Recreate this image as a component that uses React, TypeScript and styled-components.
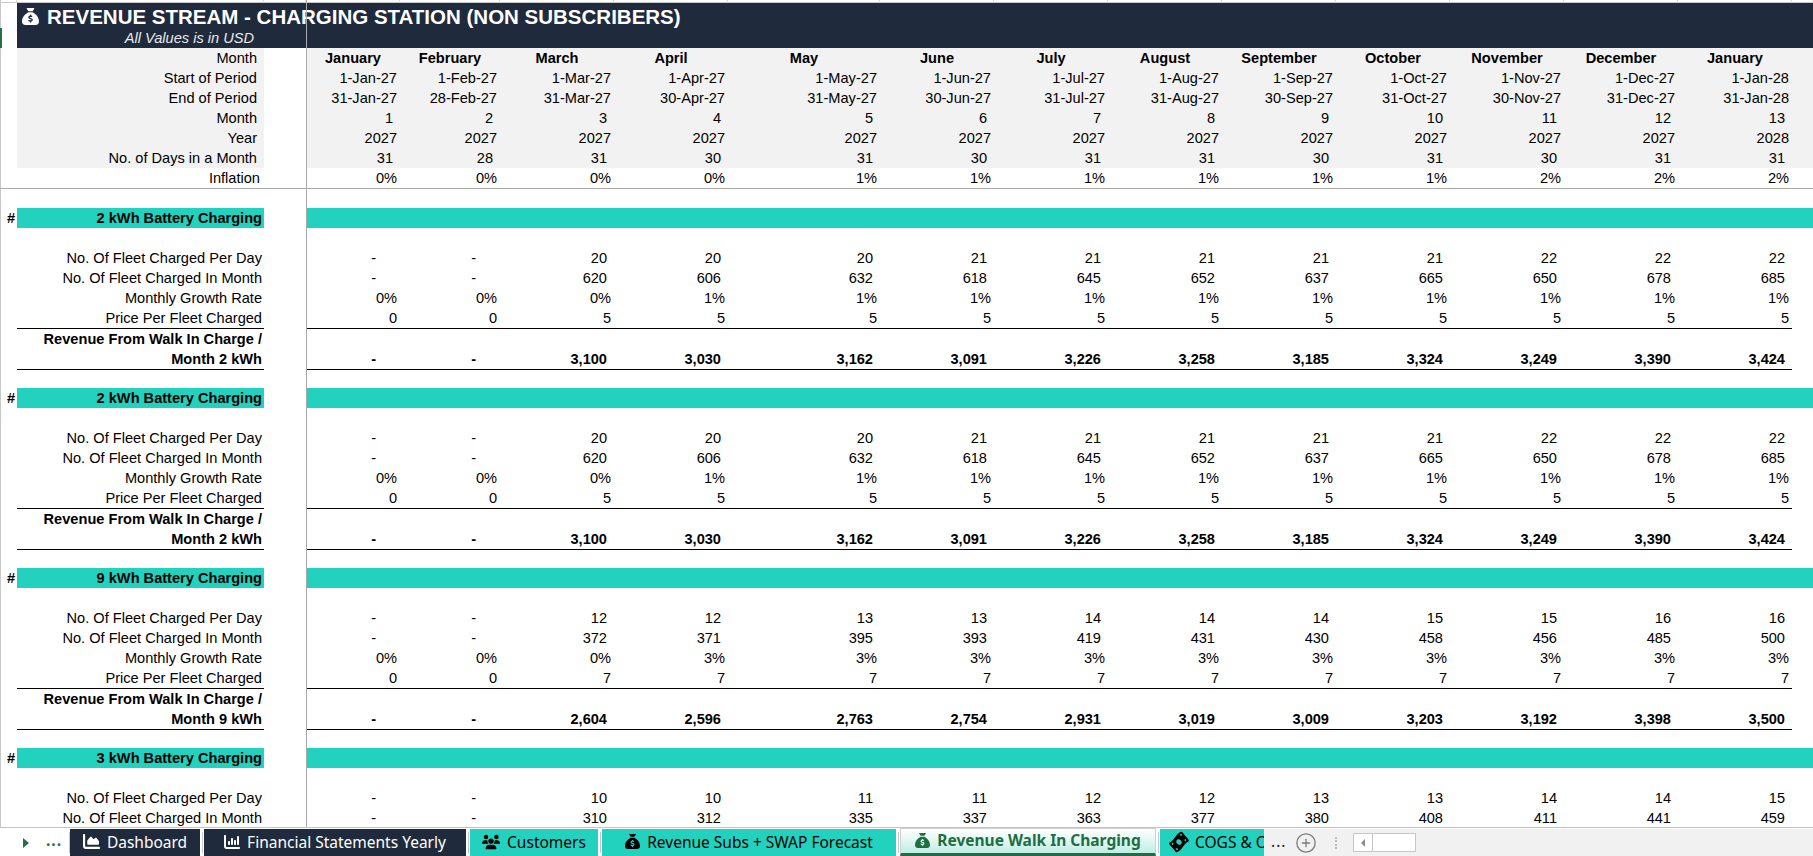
import React from "react";
import styled, { createGlobalStyle, css } from "styled-components";
import { FaSackDollar, FaUsers, FaChartArea, FaChartColumn, FaMoneyBillWave } from "react-icons/fa6";
import { CirclePlus } from "lucide-react";

const GRID = "17px 247px 42px 94px 100px 114px 114px 152px repeat(8, 114px) 1fr";
const NAVY = "#1f2a3c";
const TEAL = "#22d1be";
const GREY = "#f2f2f2";
const EXCEL_GREEN = "#217346";

type Kind = "acct" | "plain";

interface DataRow {
  label: string;
  kind: Kind;
  values: string[];
}

interface Section {
  title: string;
  unit: string;
  rows: DataRow[];
  revenue?: string[];
}

const MONTHS = [
  "January", "February", "March", "April", "May", "June", "July",
  "August", "September", "October", "November", "December", "January",
];

const HEADER_ROWS: DataRow[] = [
  {
    label: "Start of Period",
    kind: "plain",
    values: ["1-Jan-27", "1-Feb-27", "1-Mar-27", "1-Apr-27", "1-May-27", "1-Jun-27", "1-Jul-27", "1-Aug-27", "1-Sep-27", "1-Oct-27", "1-Nov-27", "1-Dec-27", "1-Jan-28"],
  },
  {
    label: "End of Period",
    kind: "plain",
    values: ["31-Jan-27", "28-Feb-27", "31-Mar-27", "30-Apr-27", "31-May-27", "30-Jun-27", "31-Jul-27", "31-Aug-27", "30-Sep-27", "31-Oct-27", "30-Nov-27", "31-Dec-27", "31-Jan-28"],
  },
  { label: "Month", kind: "acct", values: ["1", "2", "3", "4", "5", "6", "7", "8", "9", "10", "11", "12", "13"] },
  { label: "Year", kind: "plain", values: [...Array(12).fill("2027"), "2028"] },
  { label: "No. of Days in a Month", kind: "acct", values: ["31", "28", "31", "30", "31", "30", "31", "31", "30", "31", "30", "31", "31"] },
];

const INFLATION = ["0%", "0%", "0%", "0%", "1%", "1%", "1%", "1%", "1%", "1%", "2%", "2%", "2%"];

const twoKwh: Section = {
  title: "2 kWh Battery Charging",
  unit: "2 kWh",
  rows: [
    { label: "No. Of Fleet Charged Per Day", kind: "acct", values: ["-", "-", "20", "20", "20", "21", "21", "21", "21", "21", "22", "22", "22"] },
    { label: "No. Of Fleet Charged In Month", kind: "acct", values: ["-", "-", "620", "606", "632", "618", "645", "652", "637", "665", "650", "678", "685"] },
    { label: "Monthly Growth Rate", kind: "plain", values: ["0%", "0%", "0%", "1%", "1%", "1%", "1%", "1%", "1%", "1%", "1%", "1%", "1%"] },
    { label: "Price Per Fleet Charged", kind: "plain", values: ["0", "0", "5", "5", "5", "5", "5", "5", "5", "5", "5", "5", "5"] },
  ],
  revenue: ["-", "-", "3,100", "3,030", "3,162", "3,091", "3,226", "3,258", "3,185", "3,324", "3,249", "3,390", "3,424"],
};

const SECTIONS: Section[] = [
  twoKwh,
  twoKwh,
  {
    title: "9 kWh Battery Charging",
    unit: "9 kWh",
    rows: [
      { label: "No. Of Fleet Charged Per Day", kind: "acct", values: ["-", "-", "12", "12", "13", "13", "14", "14", "14", "15", "15", "16", "16"] },
      { label: "No. Of Fleet Charged In Month", kind: "acct", values: ["-", "-", "372", "371", "395", "393", "419", "431", "430", "458", "456", "485", "500"] },
      { label: "Monthly Growth Rate", kind: "plain", values: ["0%", "0%", "0%", "3%", "3%", "3%", "3%", "3%", "3%", "3%", "3%", "3%", "3%"] },
      { label: "Price Per Fleet Charged", kind: "plain", values: ["0", "0", "7", "7", "7", "7", "7", "7", "7", "7", "7", "7", "7"] },
    ],
    revenue: ["-", "-", "2,604", "2,596", "2,763", "2,754", "2,931", "3,019", "3,009", "3,203", "3,192", "3,398", "3,500"],
  },
  {
    title: "3 kWh Battery Charging",
    unit: "3 kWh",
    rows: [
      { label: "No. Of Fleet Charged Per Day", kind: "acct", values: ["-", "-", "10", "10", "11", "11", "12", "12", "13", "13", "14", "14", "15"] },
      { label: "No. Of Fleet Charged In Month", kind: "acct", values: ["-", "-", "310", "312", "335", "337", "363", "377", "380", "408", "411", "441", "459"] },
    ],
  },
];

// accounting format leaves room on the right, dashes sit further in
const padFor = (v: string, kind: Kind) => (v === "-" ? 24 : kind === "acct" ? 7 : 3);

const GlobalStyle = createGlobalStyle`
  html, body {
    margin: 0;
    padding: 0;
    background: #fff;
    overflow: hidden;
  }
  body {
    font-family: "Liberation Sans", Arial, sans-serif;
    font-size: 14.6px;
    color: #000;
  }
`;

const Page = styled.div`
  width: 1813px;
  height: 856px;
  display: flex;
  flex-direction: column;
  overflow: hidden;
`;

const Sheet = styled.div`
  position: relative;
  flex: 1;
  overflow: hidden;
  box-shadow: inset 1px 0 0 #c8c8c8;
`;

const FreezeLine = styled.div`
  position: absolute;
  top: 0;
  bottom: 0;
  left: 306px;
  width: 1px;
  background: #a9a9a9;
  z-index: 2;
`;

const Row = styled.div<{ $h?: number }>`
  display: grid;
  grid-template-columns: ${GRID};
  height: ${(p) => p.$h ?? 20}px;
  line-height: 20px;
`;

const StripCell = styled.div`
  box-sizing: border-box;
  border-right: 1px solid #dcdcdc;
  border-bottom: 1px solid #c8c8c8;
`;

const TitleBar = styled.div`
  display: grid;
  grid-template-columns: 17px 1fr;
  grid-template-rows: 25px 20px;
`;

const RowMark = styled.div`
  grid-column: 1;
  grid-row: 2;
  width: 2px;
  background: ${EXCEL_GREEN};
`;

const TitleBlock = styled.div`
  grid-column: 2;
  grid-row: 1 / 3;
  display: grid;
  grid-template-columns: 247px 1fr;
  grid-template-rows: 25px 20px;
  background: ${NAVY};
  color: #fff;
`;

const Title = styled.div`
  grid-column: 1 / -1;
  display: flex;
  align-items: center;
  gap: 8px;
  padding: 2px 0 0 5px;
  font-size: 20.5px;
  font-weight: 700;
  white-space: nowrap;
`;

const Subtitle = styled.div`
  grid-column: 1;
  grid-row: 2;
  text-align: right;
  padding-right: 10px;
  line-height: 20px;
  font-style: italic;
  color: #e9e9e9;
`;

const Label = styled.div<{ $grey?: boolean; $pad?: number; $rule?: boolean; $bold?: boolean }>`
  grid-column: 2;
  box-sizing: border-box;
  text-align: right;
  white-space: nowrap;
  padding-right: ${(p) => p.$pad ?? 2}px;
  background: ${(p) => (p.$grey ? GREY : "transparent")};
  font-weight: ${(p) => (p.$bold ? 700 : 400)};
  border-bottom: ${(p) => (p.$rule ? "1px solid #000" : "none")};
`;

const Value = styled.div<{ $pad: number; $grey?: boolean; $bold?: boolean; $rule?: boolean }>`
  box-sizing: border-box;
  display: flex;
  align-items: flex-end;
  justify-content: flex-end;
  white-space: nowrap;
  padding-right: ${(p) => p.$pad}px;
  background: ${(p) => (p.$grey ? GREY : "transparent")};
  font-weight: ${(p) => (p.$bold ? 700 : 400)};
  border-bottom: ${(p) => (p.$rule ? "1px solid #000" : "none")};
`;

const MonthName = styled.div`
  background: ${GREY};
  text-align: center;
  font-weight: 700;
  white-space: nowrap;
`;

const GreyFill = styled.div`
  background: ${GREY};
`;

const FreezeRule = styled.div`
  height: 1px;
  background: #a9a9a9;
`;

const Hash = styled.div`
  grid-column: 1;
  text-align: right;
  padding-right: 2px;
  font-weight: 700;
`;

const SectionTitle = styled.div`
  grid-column: 2;
  background: ${TEAL};
  text-align: right;
  padding-right: 2px;
  font-weight: 700;
  white-space: nowrap;
`;

const TealFill = styled.div`
  grid-column: 4 / -1;
  background: ${TEAL};
`;

const RevenueLabel = styled(Label)`
  display: flex;
  flex-direction: column;
  align-items: flex-end;
`;

/* ---------- sheet tabs ---------- */

const TabBar = styled.div`
  flex: 0 0 27px;
  display: flex;
  box-sizing: border-box;
  border-top: 1px solid #c4c4c4;
  background: #fff;
  font-family: "Noto Sans", "Open Sans", sans-serif;
  font-size: 15.5px;
`;

const Nav = styled.div`
  width: 70px;
  flex: none;
  display: flex;
  align-items: center;
  border-right: 1px solid #c8c8c8;
  margin: 4px 0 3px;
  box-sizing: border-box;
`;

const NavArrow = styled.span`
  margin-left: 23px;
  width: 0;
  height: 0;
  border-left: 6px solid ${EXCEL_GREEN};
  border-top: 5px solid transparent;
  border-bottom: 5px solid transparent;
`;

const NavMore = styled.span`
  margin-left: 17px;
  color: ${EXCEL_GREEN};
  font-weight: 700;
  letter-spacing: 1px;
  line-height: 1;
  padding-bottom: 4px;
`;

const TabGap = styled.div`
  width: 4px;
  flex: none;
  display: flex;
  justify-content: center;
  padding: 4px 0 3px;
  box-sizing: border-box;

  &::before {
    content: "";
    width: 1px;
    background: #c8c8c8;
  }
`;

type Tone = "dark" | "teal" | "active";

const Tab = styled.div<{ $w: number; $tone: Tone; $clip?: boolean }>`
  width: ${(p) => p.$w}px;
  flex: none;
  box-sizing: border-box;
  margin-top: 1px;
  display: flex;
  align-items: center;
  justify-content: ${(p) => (p.$clip ? "flex-start" : "center")};
  gap: 7px;
  padding: 0 0 2px ${(p) => (p.$clip ? 10 : 0)}px;
  overflow: hidden;
  white-space: nowrap;
  background: ${(p) => (p.$tone === "dark" ? NAVY : TEAL)};
  color: ${(p) => (p.$tone === "dark" ? "#fff" : "#000")};

  ${(p) =>
    p.$tone === "active" &&
    css`
      margin-top: 0;
      border: 1px solid #cfcfcf;
      border-bottom: 3px solid #1e6e41;
      background: linear-gradient(#ffffff, #bfeee5);
      color: #1e6e41;
      font-weight: 700;
    `}
`;

const TabText = styled.span<{ $clip?: boolean }>`
  ${(p) =>
    p.$clip &&
    css`
      overflow: hidden;
      min-width: 0;
    `}
`;

const Tail = styled.div`
  flex: 1;
  display: flex;
  align-items: center;
  background: #f1f1f1;
  margin-top: 1px;
`;

const TailMore = styled.span`
  margin-left: 7px;
  color: #222;
  letter-spacing: 1px;
  padding-bottom: 4px;
`;

const AddButton = styled.span`
  margin-left: 9px;
  display: flex;
  color: #7b7b7b;
`;

const DotSep = styled.span`
  margin-left: 18px;
  height: 12px;
  border-left: 2px dotted #bdbdbd;
`;

const Scroll = styled.div`
  margin-left: 16px;
  width: 63px;
  height: 19px;
  display: flex;
  box-sizing: border-box;
  border: 1px solid #c6c6c6;
  background: #fff;
`;

const ScrollArrow = styled.div`
  width: 18px;
  display: flex;
  align-items: center;
  justify-content: center;
  border-right: 1px solid #c6c6c6;

  &::before {
    content: "";
    border-right: 4px solid #8a8a8a;
    border-top: 4px solid transparent;
    border-bottom: 4px solid transparent;
  }
`;

const TABS: { label: string; w: number; tone: Tone; icon: React.ReactNode; clip?: boolean }[] = [
  { label: "Dashboard", w: 130, tone: "dark", icon: <FaChartArea size={17} /> },
  { label: "Financial Statements Yearly", w: 262, tone: "dark", icon: <FaChartColumn size={16} /> },
  { label: "Customers", w: 128, tone: "teal", icon: <FaUsers size={18} /> },
  { label: "Revenue Subs + SWAP Forecast", w: 294, tone: "teal", icon: <FaSackDollar size={15} /> },
  { label: "Revenue Walk In Charging", w: 256, tone: "active", icon: <FaSackDollar size={15} /> },
  {
    label: "COGS & OPEX",
    w: 104,
    tone: "teal",
    clip: true,
    icon: <FaMoneyBillWave size={18} style={{ transform: "rotate(-40deg)", flex: "none" }} />,
  },
];

function Blank() {
  return <div />;
}

function SectionBlock({ s }: { s: Section }) {
  return (
    <>
      <Row>
        <Hash>#</Hash>
        <SectionTitle>{s.title}</SectionTitle>
        <TealFill />
      </Row>
      <Row />
      {s.rows.map((r, idx) => {
        const rule = idx === 3;
        return (
          <Row key={r.label} $h={rule ? 21 : 20}>
            <Label $rule={rule}>{r.label}</Label>
            <Blank />
            {r.values.map((v, i) => (
              <Value key={i} $pad={padFor(v, r.kind)} $rule={rule}>
                {v}
              </Value>
            ))}
          </Row>
        );
      })}
      {s.revenue && (
        <>
          <Row $h={40}>
            <RevenueLabel $rule $bold>
              <span>Revenue From Walk In Charge /</span>
              <span>Month {s.unit}</span>
            </RevenueLabel>
            <Blank />
            {s.revenue.map((v, i) => (
              <Value key={i} $pad={padFor(v, "acct")} $rule $bold>
                {v}
              </Value>
            ))}
          </Row>
          <Row $h={19} />
        </>
      )}
    </>
  );
}

export default function App() {
  return (
    <>
      <GlobalStyle />
      <Page>
        <Sheet>
          <FreezeLine />
          <Row $h={3}>
            {Array.from({ length: 17 }).map((_, i) => (
              <StripCell key={i} />
            ))}
          </Row>

          <TitleBar>
            <RowMark />
            <TitleBlock>
              <Title>
                <FaSackDollar size={17} />
                <span>REVENUE STREAM - CHARGING STATION (NON SUBSCRIBERS)</span>
              </Title>
              <Subtitle>All Values is in USD</Subtitle>
            </TitleBlock>
          </TitleBar>

          <Row>
            <Label $grey $pad={7}>Month</Label>
            <Blank />
            {MONTHS.map((m, i) => (
              <MonthName key={i}>{m}</MonthName>
            ))}
            <GreyFill />
          </Row>
          {HEADER_ROWS.map((r) => (
            <Row key={r.label}>
              <Label $grey $pad={7}>{r.label}</Label>
              <Blank />
              {r.values.map((v, i) => (
                <Value key={i} $grey $pad={padFor(v, r.kind)}>
                  {v}
                </Value>
              ))}
              <GreyFill />
            </Row>
          ))}
          <Row>
            <Label $pad={4}>Inflation</Label>
            <Blank />
            {INFLATION.map((v, i) => (
              <Value key={i} $pad={3}>
                {v}
              </Value>
            ))}
          </Row>
          <FreezeRule />
          <Row $h={19} />

          {SECTIONS.map((s, i) => (
            <SectionBlock key={i} s={s} />
          ))}
        </Sheet>

        <TabBar>
          <Nav>
            <NavArrow />
            <NavMore>...</NavMore>
          </Nav>
          {TABS.map((t, i) => (
            <React.Fragment key={t.label}>
              {i > 0 && <TabGap />}
              <Tab $w={t.w} $tone={t.tone} $clip={t.clip}>
                {t.icon}
                <TabText $clip={t.clip}>{t.label}</TabText>
              </Tab>
            </React.Fragment>
          ))}
          <Tail>
            <TailMore>...</TailMore>
            <AddButton>
              <CirclePlus size={22} strokeWidth={1.4} />
            </AddButton>
            <DotSep />
            <Scroll>
              <ScrollArrow />
            </Scroll>
          </Tail>
        </TabBar>
      </Page>
    </>
  );
}
